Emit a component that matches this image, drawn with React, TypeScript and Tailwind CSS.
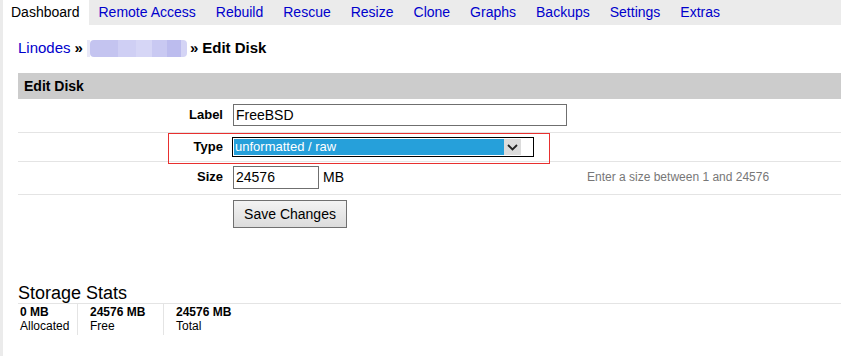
import React from "react"

const tabs = ["Remote Access", "Rebuild", "Rescue", "Resize", "Clone", "Graphs", "Backups", "Settings", "Extras"]

function Chevron() {
  return (
    <svg width="11" height="7" viewBox="0 0 11 7" fill="none">
      <path d="M1 1 L5.5 5.5 L10 1" stroke="#222" strokeWidth="1.8" />
    </svg>
  )
}

function FormRow({ label, children, className = "" }: { label: string; children: React.ReactNode; className?: string }) {
  return (
    <div className={`relative flex items-start border-b border-[#e4e4e4] ${className}`}>
      <div className="w-[215px] pr-[10px] text-right text-[13px] font-bold leading-[20px] self-stretch flex items-start justify-end">
        <span className="leading-[inherit]">{label}</span>
      </div>
      {children}
    </div>
  )
}

export default function App() {
  return (
    <div className="w-[841px] h-[356px] overflow-hidden bg-white border-l-[3px] border-[#ebebeb] text-black font-['Liberation_Sans',Arial,sans-serif]">
      {/* tabs */}
      <div className="flex h-[25px] bg-[#ebebeb] text-[14px] leading-[25px]">
        <div className="bg-white pl-[8px] pr-[9px]">Dashboard</div>
        {tabs.map((t) => (
          <div key={t} className="px-[10px] text-[#0000cc]">{t}</div>
        ))}
      </div>

      <div className="pl-[15px]">
        {/* breadcrumb */}
        <div className="mt-[14px] flex items-center h-[18px] text-[15px] leading-[18px]">
          <span className="text-[#0000cc]">Linodes</span>
          <span className="ml-[4px] font-bold">»</span>
          <span className="ml-[4px] flex h-[17px] w-[100px] blur-[0.6px]">
            <span className="w-[3px] bg-[#e8e8f8]" />
            <span className="w-[28px] bg-[#c4c4f0] rounded-l-[4px]" />
            <span className="w-[18px] bg-[#cfcff4]" />
            <span className="w-[16px] bg-[#d6d6f6]" />
            <span className="w-[15px] bg-[#c9c9f2]" />
            <span className="w-[14px] bg-[#bcbcee]" />
            <span className="w-[6px] bg-[#d4d4f5] rounded-r-[4px]" />
          </span>
          <span className="ml-[3px] font-bold">»</span>
          <span className="ml-[4px] font-bold">Edit Disk</span>
        </div>

        {/* panel header */}
        <div className="mt-[16px] h-[26px] bg-[#cccccc] pl-[6px] text-[14px] font-bold leading-[26px]">Edit Disk</div>

        <FormRow label="Label" className="h-[34px] pt-[6px]">
          <div className="w-[334px] h-[22px] -mt-[1px] border border-[#6f6f6f] pl-[2px] text-[14px] leading-[20px]">FreeBSD</div>
        </FormRow>

        <FormRow label="Type" className="h-[29px] pt-[4px]">
          <div className="-ml-[1px] flex w-[302px] h-[20px] border border-black bg-white p-[1px]">
            <div className="w-[270px] bg-[#26a0da] pl-[1px] text-[13px] leading-[16px] text-white">unformatted / raw</div>
            <div className="w-[17px] bg-[#dcdcdc] flex items-center justify-center">
              <Chevron />
            </div>
          </div>
          <div className="pointer-events-none absolute left-[150px] top-0 w-[382px] h-[31px] border border-[#e8302f]" />
        </FormRow>

        <FormRow label="Size" className="h-[33px] pt-[5px]">
          <div className="flex w-[354px] items-center -mt-[1px]">
            <div className="w-[86px] h-[23px] border border-[#6f6f6f] pl-[2px] text-[14px] leading-[21px]">24576</div>
            <span className="ml-[4px] text-[14px]">MB</span>
          </div>
          <span className="text-[12px] leading-[20px] text-[#777777]">Enter a size between 1 and 24576</span>
        </FormRow>

        <div className="flex pt-[5px]">
          <div className="w-[215px]" />
          <button className="h-[28px] w-[114px] border border-[#707070] bg-gradient-to-b from-[#f3f3f3] to-[#dcdcdc] text-[14px] leading-[26px] text-black">
            Save Changes
          </button>
        </div>

        {/* storage stats */}
        <div className="mt-[55px] h-[21px] border-b border-[#e4e4e4] text-[18px] leading-[20px]">Storage Stats</div>
        <div className="flex text-[12px] leading-[14px]">
          <div className="w-[59px] pl-[2px] pt-[1px] pb-[2px]">
            <div className="font-bold">0 MB</div>
            <div>Allocated</div>
          </div>
          <div className="w-[86px] border-l border-[#e4e4e4] pl-[12px] pt-[1px] pb-[2px]">
            <div className="font-bold">24576 MB</div>
            <div>Free</div>
          </div>
          <div className="border-l border-[#e4e4e4] pl-[12px] pt-[1px] pb-[2px]">
            <div className="font-bold">24576 MB</div>
            <div>Total</div>
          </div>
        </div>
      </div>
    </div>
  )
}
